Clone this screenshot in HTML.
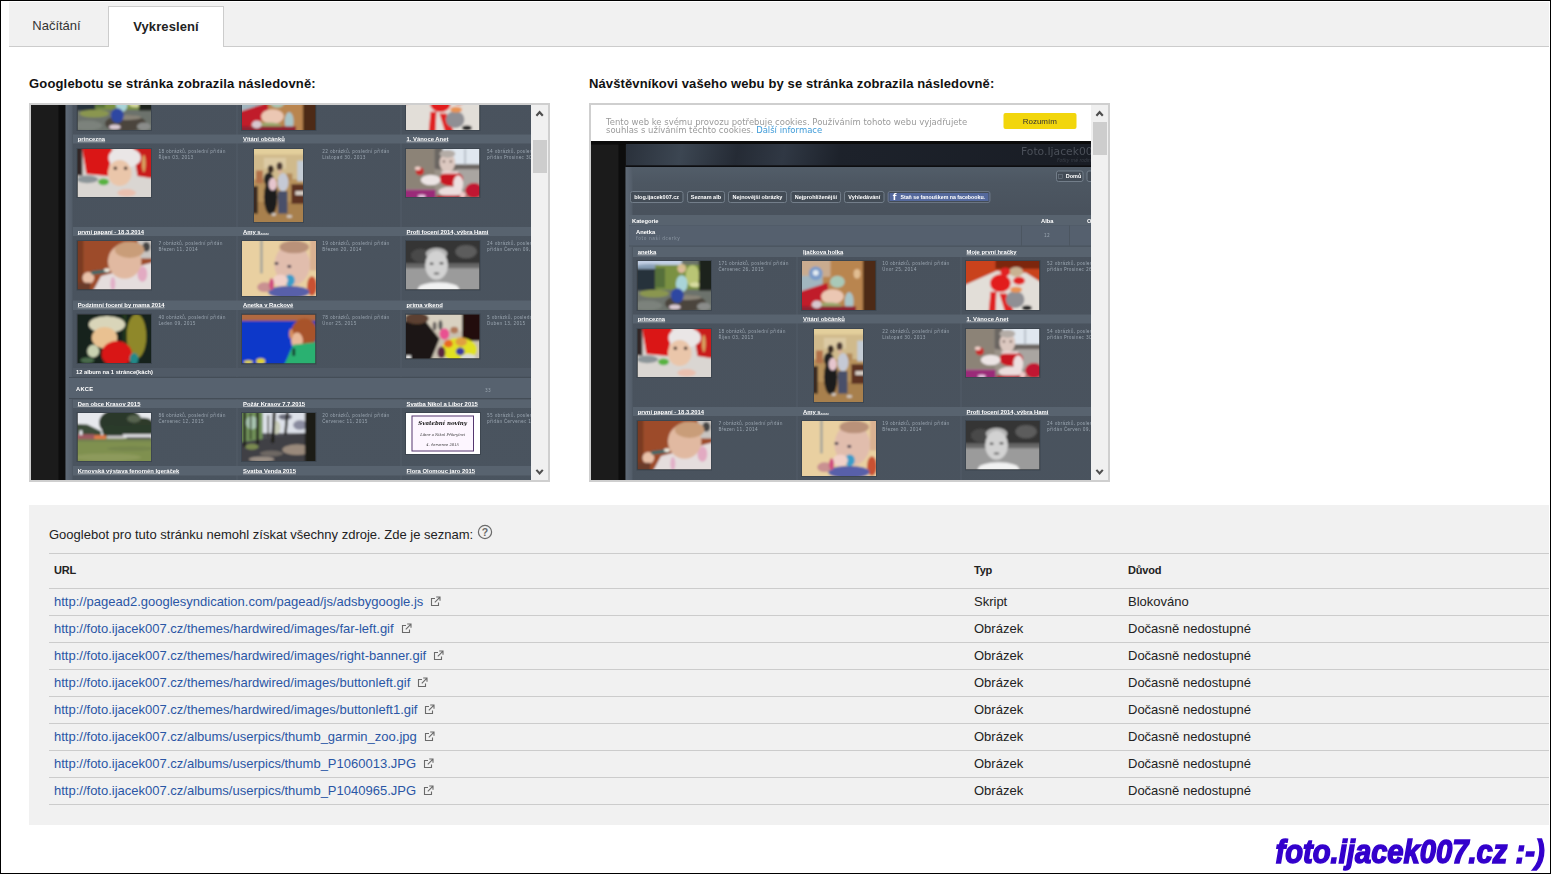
<!DOCTYPE html>
<html lang="cs">
<head>
<meta charset="utf-8">
<title>Vykreslení</title>
<style>
*{box-sizing:border-box;margin:0;padding:0}
html,body{width:1551px;height:874px;overflow:hidden;background:#fff}
body{position:relative;font-family:"Liberation Sans",Arial,sans-serif;color:#222;font-size:13px}
.abs{position:absolute}
#outer{position:absolute;left:0;top:0;width:1551px;height:874px;border:1px solid #000;pointer-events:none;z-index:50}
#tabbar{position:absolute;left:9px;top:2px;width:1540px;height:45px;background:#f1f1f1;border-bottom:1px solid #ccc}
#tab1{position:absolute;left:7px;top:3px;width:99px;height:44px;line-height:46px;text-align:center;font-size:13px;color:#333;padding-left:0}
#tab2{position:absolute;left:108px;top:6px;width:116px;height:41px;background:#fff;border:1px solid #ccc;border-bottom:none;text-align:center;font-weight:bold;font-size:13px;line-height:39px;color:#222;letter-spacing:.1px}
.h{position:absolute;top:76px;font-weight:bold;font-size:13px;line-height:16px;color:#111;white-space:nowrap;letter-spacing:.17px}
.frame{position:absolute;top:103px;width:521px;height:379px;border:2px solid #cfcfcf;background:#4b5560;overflow:hidden}
.view{position:absolute;left:0;top:0;width:500px;height:375px;overflow:hidden;background:#4a535e}
.sb{position:absolute;left:500px;top:0;width:17px;height:375px;background:#f0f0f0}
.sb .thumb{position:absolute;left:2px;width:14px;background:#cdcdcd}
.sb svg{position:absolute;left:0;top:0}
#res{position:absolute;left:29px;top:505px;width:1520px;height:320px;background:#f1f1f1}
#res .intro{position:absolute;left:20px;top:21px;font-size:13px;line-height:16px;color:#222;white-space:nowrap}
.row{position:absolute;left:20px;width:1500px;height:27px;border-top:1px solid #ccc;font-size:13px;line-height:16px;color:#222;white-space:nowrap}
.row span{position:absolute;top:5px}
.row .u{left:5px;color:#2a56a5}
.row .t{left:925px}
.row .d{left:1079px}
.row.hd{height:35px;font-size:11px;font-weight:bold;letter-spacing:-.2px}
.row.hd span{top:8px}
.ext{display:inline-block;width:11px;height:11px;margin-left:7px;vertical-align:-1px}
.hp{display:inline-block;width:16px;height:16px;margin-left:4px;vertical-align:-3px;position:relative;top:-2px}
#wm{position:absolute;right:6px;top:830.5px;font-family:"Liberation Sans",sans-serif;font-weight:bold;font-style:italic;font-size:34px;line-height:40px;color:#3300cc;white-space:nowrap;-webkit-text-stroke:1.6px #3300cc;transform:scaleX(.858);transform-origin:100% 50%}

/* preview gallery, built at 2x then scaled down */
.g{position:absolute;left:0;top:0;width:1000px;height:1160px;transform:scale(.5);transform-origin:0 0;font-family:"Liberation Sans",sans-serif;overflow:hidden}
.g>div{position:absolute}
.g .t{white-space:nowrap;transform:translateY(-50%);line-height:1.15}
.g .band{background:#58636f}
.g .band2{background:#505a66}
.g .ti{font-weight:bold;font-size:11.75px;color:#fff;text-decoration:underline}
.g .ca{font-weight:bold;font-size:11.5px;color:#fff}
.g .in{font-family:"DejaVu Sans",sans-serif;font-size:8.6px;line-height:11.7px !important;color:#9ba6b1;letter-spacing:.55px;transform:none}
.g .ck{font-family:"DejaVu Sans",sans-serif;font-size:16.95px;line-height:16.4px !important;color:#9a9a9a;transform:none}
.g .okb{background:#f2d60c;border-radius:4px;color:#333;font-size:16px;text-align:center;line-height:33px}
.g .logo{font-family:"DejaVu Sans",sans-serif;font-size:21.5px;color:#4b5059}
.g .logo2{font-family:"DejaVu Sans",sans-serif;font-size:9px;color:#3c414a;font-style:italic}
.g .nb{border:2px solid #737e8a;border-radius:5px;background:#434c56;color:#fff;font-weight:bold;font-size:11px;text-align:center;line-height:19px;white-space:nowrap;overflow:hidden}
.g .nb.fb{background:#54689c;border-color:#6a7482;box-shadow:inset 0 0 0 2px #434c56;color:#fff;font-size:10.5px}
.g .nb.fb b{font-size:17px;margin-right:8px;vertical-align:-2px;font-family:"DejaVu Sans",sans-serif}
.g .sq{display:inline-block;width:9px;height:9px;border:1px solid #7a8490;margin-right:6px;vertical-align:-1px}
.g .th{background:#333;box-shadow:0 0 0 2px #3d4650;overflow:hidden}
.g .ph{position:absolute;left:0;top:0;width:100%;height:100%;display:block}
.g .inv{position:absolute;left:0;top:0;width:100%;height:100%;background:#fff;padding:5px 12px 5px 11px}
.g .invb{width:100%;height:100%;border:2px solid #54366f;background:#fdf6ff;text-align:center;font-family:"DejaVu Serif",serif;color:#222}
.g .inv p.a{font-size:11px;font-style:italic;font-weight:bold;margin-top:7px;color:#111}
.g .inv p.b{font-size:7.5px;margin-top:11px;color:#333;font-style:italic}
</style>
</head>
<body>
<svg width="0" height="0" style="position:absolute"><defs><filter id="b2" x="-10%" y="-10%" width="120%" height="120%"><feGaussianBlur stdDeviation="2.6"/></filter></defs></svg>
<div id="tabbar"></div>
<div id="tab1">Načítání</div>
<div id="tab2">Vykreslení</div>

<div class="h" style="left:29px">Googlebotu se stránka zobrazila následovně:</div>
<div class="h" style="left:589px;letter-spacing:.12px">Návštěvníkovi vašeho webu by se stránka zobrazila následovně:</div>

<div class="frame" id="fl" style="left:29px">
  <div class="view" id="vl"><div class="g" style="top:-180px">
<div style="left:0px;top:72px;width:1000px;height:1080px;background:#1b1b1b"></div>
<div style="left:54.6px;top:72px;width:14.4px;height:1080px;background:#0d0d0d"></div>
<div style="left:70px;top:124px;width:930px;height:1040px;background:linear-gradient(#525d69 0,#4d5762 30px,#49525d 90px,#4a545f 100%)"></div>
<div style="left:69px;top:124px;width:14px;height:1040px;background:linear-gradient(90deg,#5f6a77,#525c68)"></div>
<div style="left:0px;top:72px;width:1000px;height:7px;background:#0b0b0b"></div>
<div style="left:70px;top:78px;width:930px;height:46px;background:linear-gradient(100deg,#2a313b 0,#3c4652 12%,#252b35 24%,#303844 34%,#1d222b 46%,#191d25 100%);border-bottom:3px solid #0c0d10"></div>
<div class="t logo" style="left:860px;top:94px;">Foto.Ijacek007.cz</div>
<div class="t logo2" style="left:932px;top:111px;">Fotky mé rodiny</div>
<div style="left:0px;top:0px;width:1000px;height:72px;background:#fff"></div>
<div class="t ck" style="left:30px;top:24.6px">Tento web ke svému provozu potřebuje cookies. Používáním tohoto webu vyjadřujete<br>souhlas s užíváním těchto cookies. <span style="color:#3f9bd8">Další informace</span></div>
<div class="okb" style="left:824.6px;top:16px;width:146px;height:31.6px;">Rozumím</div>
<div class="nb" style="left:930px;top:131.2px;width:54.8px;height:23.2px;"><i class="sq"></i>Domů</div>
<div class="nb" style="left:991.2px;top:131.2px;width:54.8px;height:23.2px;"></div>
<div class="nb" style="left:77.6px;top:172px;width:107.4px;height:24px;">blog.ijacek007.cz</div>
<div class="nb" style="left:192px;top:172px;width:75.6px;height:24px;">Seznam alb</div>
<div class="nb" style="left:274px;top:172px;width:118px;height:24px;">Nejnovější obrázky</div>
<div class="nb" style="left:399.2px;top:172px;width:101.2px;height:24px;">Nejprohlíženější</div>
<div class="nb" style="left:506.4px;top:172px;width:80.2px;height:24px;">Vyhledávání</div>
<div class="nb fb" style="left:593px;top:172px;width:205.6px;height:24px;"><b>f</b>Staň se fanouškem na facebooku.</div>
<div class="band" style="left:76px;top:220px;width:924px;height:20px;"></div>
<div class="t ca" style="left:82px;top:232px;">Kategorie</div>
<div class="t ca" style="left:900px;top:232px;">Alba</div>
<div class="t ca" style="left:992px;top:232px;">Obrázky</div>
<div style="left:76px;top:240px;width:924px;height:43px;background:#55606e;border-top:1px solid #4f5965;border-bottom:2px solid #4a545f"></div>
<div style="left:860px;top:241px;width:2px;height:41px;background:#4c5661"></div>
<div style="left:956px;top:241px;width:2px;height:41px;background:#4c5661"></div>
<div class="t ca" style="left:90px;top:254px;">Anetka</div>
<div class="t in" style="left:90px;top:262px;letter-spacing:1.25px;color:#8d98a4">foto naší dcerky</div>
<div class="t in" style="left:906px;top:255.2px;">12</div>
<div style="left:411px;top:284px;width:2px;height:640px;background:#535d69"></div>
<div style="left:411px;top:948px;width:2px;height:180px;background:#535d69"></div>
<div style="left:739px;top:284px;width:2px;height:640px;background:#535d69"></div>
<div style="left:739px;top:948px;width:2px;height:180px;background:#535d69"></div>
<div class="band" style="left:84px;top:284px;width:916px;height:20px;"></div>
<div class="t ti" style="left:93.4px;top:294px;">anetka</div>
<div class="t ti" style="left:424px;top:294px;">Ijačkova holka</div>
<div class="t ti" style="left:751px;top:294px;">Moje první hračky</div>
<div class="th" style="left:93px;top:311.6px;width:147.4px;height:98.8px;"><svg class="ph" viewBox="0 0 150 100" preserveAspectRatio="none"><g filter="url(#b2)"><rect x="-10" y="-10" width="170" height="120" fill="#6b7268" /><rect x="-10" y="-10" width="100" height="22" fill="#c3d0e4" /><ellipse cx="25" cy="12" rx="30" ry="6" fill="#8aa0b8" /><rect x="-10" y="16" width="52" height="46" fill="#27333a" /><rect x="36" y="8" width="92" height="50" fill="#7a9143" /><rect x="36" y="14" width="20" height="40" fill="#56703a" /><ellipse cx="112" cy="30" rx="14" ry="22" fill="#b9c574" /><ellipse cx="118" cy="48" rx="12" ry="5" fill="#d8dca0" /><rect x="125" y="-10" width="30" height="72" fill="#1f231b" /><rect x="-10" y="60" width="170" height="50" fill="#6c726c" /><ellipse cx="34" cy="66" rx="30" ry="8" fill="#8a9650" /><ellipse cx="20" cy="90" rx="30" ry="10" fill="#7c827c" /><ellipse cx="98" cy="86" rx="42" ry="17" fill="#4b453c" /><ellipse cx="100" cy="74" rx="30" ry="5" fill="#8a8478" /><ellipse cx="135" cy="92" rx="14" ry="8" fill="#8a8c8a" /><ellipse cx="90" cy="46" rx="12" ry="17" fill="#a9d4d8" /><ellipse cx="90" cy="15" rx="9" ry="9" fill="#d6bd8c" /><ellipse cx="89" cy="19" rx="5" ry="5" fill="#e0b8a0" /><ellipse cx="81" cy="70" rx="13" ry="15" fill="#2f47a2" /><ellipse cx="76" cy="93" rx="12" ry="5" fill="#dccbd4" /></g></svg></div>
<div class="th" style="left:422px;top:311.6px;width:147.4px;height:98.8px;"><svg class="ph" viewBox="0 0 150 100" preserveAspectRatio="none"><g filter="url(#b2)"><rect x="-10" y="-10" width="170" height="120" fill="#b98550" /><rect x="124" y="-10" width="36" height="120" fill="#4d2b19" /><ellipse cx="112" cy="26" rx="7" ry="10" fill="#e2bd92" /><rect x="-10" y="-10" width="68" height="42" fill="#c9ab8f" /><rect x="-10" y="30" width="52" height="42" fill="#a2b6bf" /><ellipse cx="28" cy="25" rx="14" ry="14" fill="#7b9bc9" /><ellipse cx="28" cy="24" rx="6" ry="6" fill="#e3ebf2" /><polygon points="-5,62 52,44 55,70 -5,105" fill="#c01f2b"/><ellipse cx="72" cy="42" rx="15" ry="12" fill="#a9c9b8" /><ellipse cx="62" cy="72" rx="23" ry="15" fill="#ebc7b3" /><ellipse cx="96" cy="82" rx="9" ry="19" fill="#a9c5c9" /><ellipse cx="55" cy="92" rx="26" ry="8" fill="#9aa86c" /><rect x="-10" y="92" width="120" height="18" fill="#8c2233" /><ellipse cx="30" cy="88" rx="10" ry="8" fill="#d8c8d0" /></g></svg></div>
<div class="th" style="left:749.6px;top:311.6px;width:147.4px;height:98.8px;"><svg class="ph" viewBox="0 0 150 100" preserveAspectRatio="none"><g filter="url(#b2)"><rect x="-10" y="-10" width="170" height="120" fill="#e2ded8" /><polygon points="-10,-10 160,-10 160,48 122,24 62,20 -10,52" fill="#c9421b"/><rect x="60" y="-10" width="100" height="26" fill="#7c2611" /><ellipse cx="102" cy="22" rx="14" ry="10" fill="#c9b292" /><ellipse cx="70" cy="45" rx="21" ry="18" fill="#e21d1d" /><ellipse cx="80" cy="22" rx="10" ry="9" fill="#e22222" /><ellipse cx="108" cy="40" rx="12" ry="8" fill="#e22222" /><polygon points="50,62 62,62 60,105 46,105" fill="#e02020"/><polygon points="68,66 82,66 98,105 80,105" fill="#e02020"/><ellipse cx="100" cy="78" rx="19" ry="17" fill="#8f8f94" /><ellipse cx="102" cy="58" rx="12" ry="6" fill="#ea9352" /><ellipse cx="124" cy="95" rx="10" ry="5" fill="#1e1e1e" /></g></svg></div>
<div class="t in" style="left:254.8px;top:311.4px;">171 obrázků, poslední přidán<br>Červenec 26, 2015</div>
<div class="t in" style="left:582.6px;top:311.4px;">10 obrázků, poslední přidán<br>Únor 25, 2014</div>
<div class="t in" style="left:912px;top:311.4px;">52 obrázků, poslední<br>přidán Prosinec 26, 2013</div>
<div class="band" style="left:84px;top:418.8px;width:916px;height:18.4px;"></div>
<div class="t ti" style="left:93.4px;top:428px;">princezna</div>
<div class="t ti" style="left:424px;top:428px;">Vítání občánků</div>
<div class="t ti" style="left:751px;top:428px;">1. Vánoce Anet</div>
<div class="th" style="left:93px;top:447.6px;width:147.4px;height:96.4px;"><svg class="ph" viewBox="0 0 150 100" preserveAspectRatio="none"><g filter="url(#b2)"><rect x="-10" y="-10" width="170" height="120" fill="#dad6d2" /><polygon points="8,-10 72,-10 62,56 18,52" fill="#da1919"/><rect x="-10" y="-10" width="20" height="65" fill="#302828" /><polygon points="112,-10 160,-10 160,62 122,56" fill="#c91c1c"/><ellipse cx="96" cy="18" rx="33" ry="21" fill="#eae6e6" /><ellipse cx="86" cy="50" rx="24" ry="27" fill="#eac6aa" /><ellipse cx="53" cy="68" rx="11" ry="7" fill="#58b241" /><ellipse cx="20" cy="63" rx="22" ry="8" fill="#8b9498" /><ellipse cx="100" cy="91" rx="19" ry="8" fill="#eac0af" /><ellipse cx="77" cy="40" rx="3.5" ry="3.5" fill="#3e261e" /><ellipse cx="98" cy="40" rx="3.5" ry="3.5" fill="#3e261e" /><ellipse cx="135" cy="30" rx="4" ry="18" fill="#d8a060" /></g></svg></div>
<div class="th" style="left:446px;top:447.6px;width:98.4px;height:146.8px;"><svg class="ph" viewBox="0 0 100 150" preserveAspectRatio="none"><g filter="url(#b2)"><rect x="-10" y="-10" width="120" height="170" fill="#b8925c" /><rect x="-10" y="-10" width="120" height="22" fill="#e3cf9c" /><rect x="-10" y="12" width="120" height="50" fill="#d0ba8c" /><rect x="20" y="18" width="45" height="22" fill="#dccaa4" /><rect x="-10" y="108" width="120" height="50" fill="#a8804e" /><rect x="88" y="24" width="16" height="42" fill="#c5cdd5" /><rect x="66" y="50" width="12" height="14" fill="#b08858" /><rect x="76" y="72" width="28" height="40" fill="#5b3121" /><rect x="84" y="86" width="18" height="8" fill="#d8d0c8" /><rect x="-10" y="76" width="18" height="56" fill="#3b2b21" /><rect x="4" y="44" width="14" height="26" fill="#b07048" /><ellipse cx="34" cy="98" rx="14" ry="36" fill="#1c1a1e" /><ellipse cx="34" cy="41" rx="6" ry="8" fill="#392923" /><ellipse cx="30" cy="62" rx="10" ry="14" fill="#242024" /><ellipse cx="59" cy="68" rx="11" ry="19" fill="#c5c9d5" /><ellipse cx="52" cy="35" rx="6" ry="8" fill="#493831" /><ellipse cx="53" cy="46" rx="4" ry="4" fill="#d8b098" /><rect x="49" y="86" width="19" height="46" fill="#485069" /><ellipse cx="38" cy="72" rx="8" ry="13" fill="#e6c6ce" /><ellipse cx="40" cy="134" rx="5" ry="3" fill="#d0c8c0" /><ellipse cx="72" cy="138" rx="6" ry="3" fill="#d0c8c0" /></g></svg></div>
<div class="th" style="left:749.6px;top:447.6px;width:147.8px;height:96.8px;"><svg class="ph" viewBox="0 0 150 100" preserveAspectRatio="none"><g filter="url(#b2)"><rect x="-10" y="-10" width="170" height="120" fill="#9b9389" /><rect x="-10" y="-10" width="68" height="92" fill="#8c8377" /><rect x="74" y="-10" width="90" height="42" fill="#e0e7ef" /><rect x="58" y="-10" width="16" height="50" fill="#6a6662" /><rect x="60" y="32" width="100" height="10" fill="#6b6561" /><rect x="118" y="0" width="4" height="32" fill="#b8c0c8" /><rect x="104" y="42" width="60" height="42" fill="#a9a5a1" /><ellipse cx="84" cy="28" rx="16" ry="20" fill="#dcc8c0" /><ellipse cx="84" cy="10" rx="16" ry="8" fill="#b4aca6" /><ellipse cx="77" cy="26" rx="2.5" ry="2" fill="#5a4640" /><ellipse cx="91" cy="26" rx="2.5" ry="2" fill="#5a4640" /><ellipse cx="92" cy="62" rx="24" ry="15" fill="#c91921" /><rect x="72" y="46" width="34" height="5" fill="#ecd8d8" /><ellipse cx="50" cy="64" rx="20" ry="11" fill="#ece4e4" /><ellipse cx="106" cy="72" rx="10" ry="18" fill="#ece0e0" /><ellipse cx="28" cy="46" rx="8" ry="8" fill="#c92929" /><ellipse cx="24" cy="40" rx="6" ry="4" fill="#f0d0c8" /><ellipse cx="90" cy="88" rx="24" ry="10" fill="#ecdede" /><rect x="-10" y="84" width="70" height="26" fill="#9b2979" /><ellipse cx="32" cy="98" rx="8" ry="4" fill="#e8c0e0" /><ellipse cx="138" cy="86" rx="18" ry="16" fill="#c11931" /><rect x="62" y="96" width="60" height="10" fill="#b11929" /><ellipse cx="115" cy="95" rx="6" ry="6" fill="#f0c8c8" /></g></svg></div>
<div class="t in" style="left:254.8px;top:447.4px;">18 obrázků, poslední přidán<br>Říjen 03, 2013</div>
<div class="t in" style="left:582.6px;top:447.4px;">22 obrázků, poslední přidán<br>Listopad 30, 2013</div>
<div class="t in" style="left:912px;top:447.4px;">54 obrázků, poslední<br>přidán Prosinec 30, 2013</div>
<div class="band" style="left:84px;top:604px;width:916px;height:18px;"></div>
<div class="t ti" style="left:93.4px;top:613px;">první papaní - 18.3.2014</div>
<div class="t ti" style="left:424px;top:613px;">Amy s.....</div>
<div class="t ti" style="left:751px;top:613px;">Profi focení 2014, výbra Hami</div>
<div class="th" style="left:93px;top:632px;width:147.4px;height:97px;"><svg class="ph" viewBox="0 0 150 100" preserveAspectRatio="none"><g filter="url(#b2)"><rect x="-10" y="-10" width="170" height="120" fill="#9d4b29" /><rect x="-10" y="-10" width="22" height="120" fill="#7a3a24" /><rect x="122" y="-10" width="40" height="46" fill="#c9c5c1" /><ellipse cx="140" cy="12" rx="8" ry="10" fill="#454545" /><polygon points="48,72 160,42 160,110 28,110" fill="#e5dddd"/><ellipse cx="132" cy="68" rx="10" ry="16" fill="#e2aac2" /><ellipse cx="72" cy="88" rx="5" ry="14" fill="#e2b0c8" /><ellipse cx="96" cy="42" rx="34" ry="36" fill="#e1b9a1" /><ellipse cx="106" cy="18" rx="30" ry="17" fill="#c99d79" /><ellipse cx="22" cy="76" rx="12" ry="12" fill="#e9c1a9" /><rect x="28" y="60" width="36" height="7" fill="#3f6969" transform="rotate(-8 46 63)"/><ellipse cx="60" cy="60" rx="6" ry="4" fill="#f0ece0" /><rect x="-10" y="86" width="36" height="24" fill="#6b3b29" /></g></svg></div>
<div class="th" style="left:422px;top:632px;width:147.8px;height:110px;"><svg class="ph" viewBox="0 0 150 112" preserveAspectRatio="none"><g filter="url(#b2)"><rect x="-10" y="-10" width="170" height="132" fill="#e9d0a1" /><rect x="37" y="-10" width="5" height="76" fill="#a4a49c" /><ellipse cx="102" cy="48" rx="36" ry="42" fill="#e1bdad" /><ellipse cx="106" cy="12" rx="30" ry="13" fill="#b99179" /><rect x="138" y="-10" width="22" height="70" fill="#d9b191" /><ellipse cx="142" cy="92" rx="10" ry="20" fill="#c95131" /><ellipse cx="95" cy="104" rx="42" ry="13" fill="#5961a9" /><ellipse cx="97" cy="80" rx="10" ry="12" fill="#3b9dc9" /><ellipse cx="78" cy="80" rx="15" ry="12" fill="#f1d1c9" /><ellipse cx="46" cy="94" rx="15" ry="10" fill="#c99191" /><ellipse cx="60" cy="88" rx="5" ry="12" fill="#d05080" /><ellipse cx="70" cy="46" rx="4" ry="3" fill="#40384a" /><ellipse cx="96" cy="52" rx="4" ry="3" fill="#40384a" /></g></svg></div>
<div class="th" style="left:749.6px;top:632px;width:147.8px;height:97px;"><svg class="ph" viewBox="0 0 150 100" preserveAspectRatio="none"><g filter="url(#b2)"><rect x="-10" y="-10" width="170" height="120" fill="#353535" /><ellipse cx="122" cy="22" rx="22" ry="14" fill="#5c5c5c" /><ellipse cx="30" cy="30" rx="20" ry="14" fill="#4a4a4a" /><rect x="-10" y="52" width="170" height="60" fill="#9b9b9b" /><rect x="-10" y="46" width="170" height="10" fill="#686868" /><ellipse cx="62" cy="26" rx="22" ry="12" fill="#b4b4b4" /><ellipse cx="62" cy="50" rx="23" ry="30" fill="#d2d2d2" /><ellipse cx="66" cy="100" rx="42" ry="15" fill="#f2f2f2" /><ellipse cx="52" cy="47" rx="4" ry="2.5" fill="#555" /><ellipse cx="72" cy="46" rx="4" ry="2.5" fill="#555" /><ellipse cx="62" cy="67" rx="6" ry="2.5" fill="#777" /></g></svg></div>
<div class="t in" style="left:254.8px;top:631.8px;">7 obrázků, poslední přidán<br>Březen 11, 2014</div>
<div class="t in" style="left:582.6px;top:631.8px;">19 obrázků, poslední přidán<br>Březen 20, 2014</div>
<div class="t in" style="left:912px;top:631.8px;">24 obrázků, poslední<br>přidán Červen 09, 2014</div>
<div class="band" style="left:84px;top:750.8px;width:916px;height:19.2px;"></div>
<div class="t ti" style="left:93.4px;top:760.4px;">Podzimní focení by mama 2014</div>
<div class="t ti" style="left:424px;top:760.4px;">Anetka v Rackové</div>
<div class="t ti" style="left:751px;top:760.4px;">prima víkend</div>
<div class="th" style="left:93px;top:779.4px;width:147.4px;height:96.4px;"><svg class="ph" viewBox="0 0 150 100" preserveAspectRatio="none"><g filter="url(#b2)"><rect x="-10" y="-10" width="170" height="120" fill="#15241a" /><ellipse cx="120" cy="45" rx="20" ry="46" fill="#8f8829" /><rect x="92" y="-10" width="8" height="120" fill="#23351f" /><ellipse cx="60" cy="21" rx="37" ry="18" fill="#d9d5b9" /><ellipse cx="55" cy="48" rx="26" ry="22" fill="#e9c191" /><ellipse cx="80" cy="82" rx="31" ry="27" fill="#d91515" /><ellipse cx="32" cy="76" rx="12" ry="13" fill="#c9d1b1" /><ellipse cx="115" cy="92" rx="9" ry="12" fill="#218989" /><ellipse cx="20" cy="95" rx="14" ry="6" fill="#4a6a4c" /></g></svg></div>
<div class="th" style="left:422px;top:779.4px;width:147.4px;height:97.2px;"><svg class="ph" viewBox="0 0 150 100" preserveAspectRatio="none"><g filter="url(#b2)"><rect x="-10" y="-10" width="170" height="120" fill="#0839c9" /><rect x="-10" y="-10" width="170" height="23" fill="#b16941" /><ellipse cx="127" cy="38" rx="27" ry="30" fill="#a8522a" /><ellipse cx="112" cy="54" rx="12" ry="17" fill="#e9b999" /><polygon points="84,108 104,62 160,56 160,108" fill="#29b171"/><ellipse cx="13" cy="98" rx="9" ry="4" fill="#e9d941" /><ellipse cx="38" cy="96" rx="9" ry="6" fill="#e1d131" /><rect x="103" y="70" width="5" height="15" fill="#181828" /><ellipse cx="100" cy="40" rx="4" ry="10" fill="#d89060" /></g></svg></div>
<div class="th" style="left:749.6px;top:779.4px;width:147.8px;height:87.6px;"><svg class="ph" viewBox="0 0 150 90" preserveAspectRatio="none"><g filter="url(#b2)"><rect x="-10" y="-10" width="170" height="110" fill="#c9c1b1" /><rect x="38" y="-10" width="80" height="44" fill="#d9d1c1" /><ellipse cx="70" cy="22" rx="4" ry="10" fill="#5a5a5a" /><ellipse cx="58" cy="24" rx="4" ry="9" fill="#6a6460" /><polygon points="-10,14 40,14 68,50 48,100 -10,100" fill="#1b1715"/><ellipse cx="22" cy="8" rx="24" ry="12" fill="#5b4131" /><rect x="114" y="-10" width="46" height="64" fill="#21110d" /><ellipse cx="108" cy="72" rx="36" ry="24" fill="#e1e121" /><ellipse cx="78" cy="40" rx="10" ry="12" fill="#e95191" /><ellipse cx="86" cy="60" rx="9" ry="8" fill="#e96921" /><ellipse cx="112" cy="56" rx="12" ry="9" fill="#e0a040" /><ellipse cx="98" cy="32" rx="8" ry="7" fill="#b07858" /><ellipse cx="110" cy="76" rx="9" ry="8" fill="#3939a1" /><ellipse cx="126" cy="88" rx="15" ry="7" fill="#d9d9d9" /><rect x="0" y="84" width="10" height="16" fill="#e8e8e8" /><ellipse cx="72" cy="78" rx="8" ry="12" fill="#5a2840" /></g></svg></div>
<div class="t in" style="left:254.8px;top:779.2px;">40 obrázků, poslední přidán<br>Leden 09, 2015</div>
<div class="t in" style="left:582.6px;top:779.2px;">78 obrázků, poslední přidán<br>Únor 25, 2015</div>
<div class="t in" style="left:912px;top:779.2px;">5 obrázků, poslední přidán<br>Duben 13, 2015</div>
<div class="band2" style="left:84px;top:885.6px;width:916px;height:17.4px;"></div>
<div class="t ca" style="left:90px;top:894.4px;">12 album na 1 stránce(kách)</div>
<div style="left:76px;top:904px;width:924px;height:44px;background:#57626f;border-top:2px solid #444d57;border-bottom:2px solid #444d57"></div>
<div class="t ca" style="left:90px;top:927.6px;letter-spacing:.5px">AKCE</div>
<div class="t in" style="left:908px;top:924.6px;">33</div>
<div class="band" style="left:84px;top:948.8px;width:916px;height:17.2px;"></div>
<div class="t ti" style="left:93.4px;top:957.4px;">Den obce Krasov 2015</div>
<div class="t ti" style="left:424px;top:957.4px;">Požár Krasov 7.7.2015</div>
<div class="t ti" style="left:751px;top:957.4px;">Svatba Nikol a Libor 2015</div>
<div class="th" style="left:93px;top:976px;width:147.4px;height:96.4px;"><svg class="ph" viewBox="0 0 150 100" preserveAspectRatio="none"><g filter="url(#b2)"><rect x="-10" y="-10" width="170" height="120" fill="#7f8f4f" /><rect x="-10" y="-10" width="170" height="56" fill="#e7e9ed" /><ellipse cx="88" cy="20" rx="44" ry="30" fill="#2b3929" /><ellipse cx="70" cy="38" rx="20" ry="12" fill="#34442f" /><ellipse cx="134" cy="32" rx="26" ry="22" fill="#2d3b2b" /><rect x="52" y="26" width="108" height="22" fill="#2c3a2a" /><ellipse cx="115" cy="12" rx="14" ry="8" fill="#56644f" /><polygon points="-10,22 20,24 48,38 48,50 -10,50" fill="#3b4b39"/><rect x="92" y="44" width="62" height="8" fill="#e1e1e5" /><rect x="100" y="50" width="50" height="4" fill="#5a5a58" /><rect x="33" y="46" width="25" height="8" fill="#e17949" /><rect x="-10" y="44" width="44" height="11" fill="#9c5860" /><rect x="4" y="36" width="6" height="10" fill="#e8e8f0" /><rect x="60" y="47" width="34" height="6" fill="#c8c4c8" /><rect x="-10" y="56" width="170" height="50" fill="#7f9050" /><rect x="-10" y="55" width="170" height="4" fill="#6f7f50" /><ellipse cx="60" cy="92" rx="70" ry="8" fill="#8d9a5c" /><ellipse cx="110" cy="74" rx="50" ry="5" fill="#76864e" /></g></svg></div>
<div class="th" style="left:422px;top:976px;width:147.4px;height:96.4px;"><svg class="ph" viewBox="0 0 150 100" preserveAspectRatio="none"><g filter="url(#b2)"><rect x="-10" y="-10" width="170" height="120" fill="#4c4c52" /><rect x="-10" y="-10" width="150" height="52" fill="#dde1e9" /><rect x="-10" y="-10" width="52" height="72" fill="#6f9058" /><ellipse cx="20" cy="20" rx="12" ry="14" fill="#a8c4b0" /><ellipse cx="118" cy="25" rx="14" ry="10" fill="#8a8ca0" /><ellipse cx="88" cy="8" rx="14" ry="6" fill="#6a6c7a" /><ellipse cx="70" cy="30" rx="8" ry="14" fill="#c8ccb8" /><polygon points="-10,62 138,40 160,110 -10,110" fill="#3f3f45"/><ellipse cx="112" cy="76" rx="30" ry="11" fill="#9a8a7c" /><ellipse cx="60" cy="84" rx="24" ry="6" fill="#6e6864" /><ellipse cx="40" cy="96" rx="26" ry="6" fill="#9a8e84" /><ellipse cx="20" cy="70" rx="14" ry="6" fill="#7a8a50" /><rect x="3" y="-10" width="5" height="80" fill="#1c1c18" /><rect x="29" y="-10" width="5" height="75" fill="#1c1c18" /><rect x="61" y="-10" width="6" height="72" fill="#1c1c18" transform="rotate(3 64 30)"/><rect x="88" y="-10" width="5" height="56" fill="#1c1c18" transform="rotate(5 90 20)"/><rect x="128" y="-10" width="24" height="120" fill="#1c1c18" /><rect x="52" y="5" width="3" height="45" fill="#3c3c30" /><rect x="16" y="0" width="3" height="55" fill="#2c3424" /></g></svg></div>
<div class="th" style="left:749.6px;top:976px;width:148.4px;height:82.4px;"><div class="inv"><div class="invb"><p class="a">Svatební noviny</p><p class="b">Libor a Nikol Přikrylovi</p><p class="b">4. července 2015</p></div></div></div>
<div class="t in" style="left:254.8px;top:975.8px;">86 obrázků, poslední přidán<br>Červenec 12, 2015</div>
<div class="t in" style="left:582.6px;top:975.8px;">20 obrázků, poslední přidán<br>Červenec 11, 2015</div>
<div class="t in" style="left:912px;top:975.8px;">55 obrázků, poslední<br>přidán Červenec 19, 2015</div>
<div class="band" style="left:84px;top:1082px;width:916px;height:18.8px;"></div>
<div class="t ti" style="left:93.4px;top:1091.6px;">Krnovská výstava fenomén Igeráček</div>
<div class="t ti" style="left:424px;top:1091.6px;">Svatba Venda 2015</div>
<div class="t ti" style="left:751px;top:1091.6px;">Flora Olomouc jaro 2015</div>
</div></div>
  <div class="sb"><div class="thumb" style="top:35px;height:33px"></div><svg class="ar" viewBox="0 0 17 375" width="17" height="375"><path d="M5.4 10.8 L8.6 7.2 L11.8 10.8 M5.4 364.9 L8.6 368.5 L11.8 364.9" fill="none" stroke="#4f4f4f" stroke-width="2.1"/></svg></div>
</div>
<div class="frame" id="fr" style="left:589px">
  <div class="view" id="vr"><div class="g">
<div style="left:0px;top:72px;width:1000px;height:1080px;background:#1b1b1b"></div>
<div style="left:54.6px;top:72px;width:14.4px;height:1080px;background:#0d0d0d"></div>
<div style="left:70px;top:124px;width:930px;height:1040px;background:linear-gradient(#525d69 0,#4d5762 30px,#49525d 90px,#4a545f 100%)"></div>
<div style="left:69px;top:124px;width:14px;height:1040px;background:linear-gradient(90deg,#5f6a77,#525c68)"></div>
<div style="left:0px;top:72px;width:1000px;height:7px;background:#0b0b0b"></div>
<div style="left:70px;top:78px;width:930px;height:46px;background:linear-gradient(100deg,#2a313b 0,#3c4652 12%,#252b35 24%,#303844 34%,#1d222b 46%,#191d25 100%);border-bottom:3px solid #0c0d10"></div>
<div class="t logo" style="left:860px;top:94px;">Foto.Ijacek007.cz</div>
<div class="t logo2" style="left:932px;top:111px;">Fotky mé rodiny</div>
<div style="left:0px;top:0px;width:1000px;height:72px;background:#fff"></div>
<div class="t ck" style="left:30px;top:24.6px">Tento web ke svému provozu potřebuje cookies. Používáním tohoto webu vyjadřujete<br>souhlas s užíváním těchto cookies. <span style="color:#3f9bd8">Další informace</span></div>
<div class="okb" style="left:824.6px;top:16px;width:146px;height:31.6px;">Rozumím</div>
<div class="nb" style="left:930px;top:131.2px;width:54.8px;height:23.2px;"><i class="sq"></i>Domů</div>
<div class="nb" style="left:991.2px;top:131.2px;width:54.8px;height:23.2px;"></div>
<div class="nb" style="left:77.6px;top:172px;width:107.4px;height:24px;">blog.ijacek007.cz</div>
<div class="nb" style="left:192px;top:172px;width:75.6px;height:24px;">Seznam alb</div>
<div class="nb" style="left:274px;top:172px;width:118px;height:24px;">Nejnovější obrázky</div>
<div class="nb" style="left:399.2px;top:172px;width:101.2px;height:24px;">Nejprohlíženější</div>
<div class="nb" style="left:506.4px;top:172px;width:80.2px;height:24px;">Vyhledávání</div>
<div class="nb fb" style="left:593px;top:172px;width:205.6px;height:24px;"><b>f</b>Staň se fanouškem na facebooku.</div>
<div class="band" style="left:76px;top:220px;width:924px;height:20px;"></div>
<div class="t ca" style="left:82px;top:232px;">Kategorie</div>
<div class="t ca" style="left:900px;top:232px;">Alba</div>
<div class="t ca" style="left:992px;top:232px;">Obrázky</div>
<div style="left:76px;top:240px;width:924px;height:43px;background:#55606e;border-top:1px solid #4f5965;border-bottom:2px solid #4a545f"></div>
<div style="left:860px;top:241px;width:2px;height:41px;background:#4c5661"></div>
<div style="left:956px;top:241px;width:2px;height:41px;background:#4c5661"></div>
<div class="t ca" style="left:90px;top:254px;">Anetka</div>
<div class="t in" style="left:90px;top:262px;letter-spacing:1.25px;color:#8d98a4">foto naší dcerky</div>
<div class="t in" style="left:906px;top:255.2px;">12</div>
<div style="left:411px;top:284px;width:2px;height:640px;background:#535d69"></div>
<div style="left:411px;top:948px;width:2px;height:180px;background:#535d69"></div>
<div style="left:739px;top:284px;width:2px;height:640px;background:#535d69"></div>
<div style="left:739px;top:948px;width:2px;height:180px;background:#535d69"></div>
<div class="band" style="left:84px;top:284px;width:916px;height:20px;"></div>
<div class="t ti" style="left:93.4px;top:294px;">anetka</div>
<div class="t ti" style="left:424px;top:294px;">Ijačkova holka</div>
<div class="t ti" style="left:751px;top:294px;">Moje první hračky</div>
<div class="th" style="left:93px;top:311.6px;width:147.4px;height:98.8px;"><svg class="ph" viewBox="0 0 150 100" preserveAspectRatio="none"><g filter="url(#b2)"><rect x="-10" y="-10" width="170" height="120" fill="#6b7268" /><rect x="-10" y="-10" width="100" height="22" fill="#c3d0e4" /><ellipse cx="25" cy="12" rx="30" ry="6" fill="#8aa0b8" /><rect x="-10" y="16" width="52" height="46" fill="#27333a" /><rect x="36" y="8" width="92" height="50" fill="#7a9143" /><rect x="36" y="14" width="20" height="40" fill="#56703a" /><ellipse cx="112" cy="30" rx="14" ry="22" fill="#b9c574" /><ellipse cx="118" cy="48" rx="12" ry="5" fill="#d8dca0" /><rect x="125" y="-10" width="30" height="72" fill="#1f231b" /><rect x="-10" y="60" width="170" height="50" fill="#6c726c" /><ellipse cx="34" cy="66" rx="30" ry="8" fill="#8a9650" /><ellipse cx="20" cy="90" rx="30" ry="10" fill="#7c827c" /><ellipse cx="98" cy="86" rx="42" ry="17" fill="#4b453c" /><ellipse cx="100" cy="74" rx="30" ry="5" fill="#8a8478" /><ellipse cx="135" cy="92" rx="14" ry="8" fill="#8a8c8a" /><ellipse cx="90" cy="46" rx="12" ry="17" fill="#a9d4d8" /><ellipse cx="90" cy="15" rx="9" ry="9" fill="#d6bd8c" /><ellipse cx="89" cy="19" rx="5" ry="5" fill="#e0b8a0" /><ellipse cx="81" cy="70" rx="13" ry="15" fill="#2f47a2" /><ellipse cx="76" cy="93" rx="12" ry="5" fill="#dccbd4" /></g></svg></div>
<div class="th" style="left:422px;top:311.6px;width:147.4px;height:98.8px;"><svg class="ph" viewBox="0 0 150 100" preserveAspectRatio="none"><g filter="url(#b2)"><rect x="-10" y="-10" width="170" height="120" fill="#b98550" /><rect x="124" y="-10" width="36" height="120" fill="#4d2b19" /><ellipse cx="112" cy="26" rx="7" ry="10" fill="#e2bd92" /><rect x="-10" y="-10" width="68" height="42" fill="#c9ab8f" /><rect x="-10" y="30" width="52" height="42" fill="#a2b6bf" /><ellipse cx="28" cy="25" rx="14" ry="14" fill="#7b9bc9" /><ellipse cx="28" cy="24" rx="6" ry="6" fill="#e3ebf2" /><polygon points="-5,62 52,44 55,70 -5,105" fill="#c01f2b"/><ellipse cx="72" cy="42" rx="15" ry="12" fill="#a9c9b8" /><ellipse cx="62" cy="72" rx="23" ry="15" fill="#ebc7b3" /><ellipse cx="96" cy="82" rx="9" ry="19" fill="#a9c5c9" /><ellipse cx="55" cy="92" rx="26" ry="8" fill="#9aa86c" /><rect x="-10" y="92" width="120" height="18" fill="#8c2233" /><ellipse cx="30" cy="88" rx="10" ry="8" fill="#d8c8d0" /></g></svg></div>
<div class="th" style="left:749.6px;top:311.6px;width:147.4px;height:98.8px;"><svg class="ph" viewBox="0 0 150 100" preserveAspectRatio="none"><g filter="url(#b2)"><rect x="-10" y="-10" width="170" height="120" fill="#e2ded8" /><polygon points="-10,-10 160,-10 160,48 122,24 62,20 -10,52" fill="#c9421b"/><rect x="60" y="-10" width="100" height="26" fill="#7c2611" /><ellipse cx="102" cy="22" rx="14" ry="10" fill="#c9b292" /><ellipse cx="70" cy="45" rx="21" ry="18" fill="#e21d1d" /><ellipse cx="80" cy="22" rx="10" ry="9" fill="#e22222" /><ellipse cx="108" cy="40" rx="12" ry="8" fill="#e22222" /><polygon points="50,62 62,62 60,105 46,105" fill="#e02020"/><polygon points="68,66 82,66 98,105 80,105" fill="#e02020"/><ellipse cx="100" cy="78" rx="19" ry="17" fill="#8f8f94" /><ellipse cx="102" cy="58" rx="12" ry="6" fill="#ea9352" /><ellipse cx="124" cy="95" rx="10" ry="5" fill="#1e1e1e" /></g></svg></div>
<div class="t in" style="left:254.8px;top:311.4px;">171 obrázků, poslední přidán<br>Červenec 26, 2015</div>
<div class="t in" style="left:582.6px;top:311.4px;">10 obrázků, poslední přidán<br>Únor 25, 2014</div>
<div class="t in" style="left:912px;top:311.4px;">52 obrázků, poslední<br>přidán Prosinec 26, 2013</div>
<div class="band" style="left:84px;top:418.8px;width:916px;height:18.4px;"></div>
<div class="t ti" style="left:93.4px;top:428px;">princezna</div>
<div class="t ti" style="left:424px;top:428px;">Vítání občánků</div>
<div class="t ti" style="left:751px;top:428px;">1. Vánoce Anet</div>
<div class="th" style="left:93px;top:447.6px;width:147.4px;height:96.4px;"><svg class="ph" viewBox="0 0 150 100" preserveAspectRatio="none"><g filter="url(#b2)"><rect x="-10" y="-10" width="170" height="120" fill="#dad6d2" /><polygon points="8,-10 72,-10 62,56 18,52" fill="#da1919"/><rect x="-10" y="-10" width="20" height="65" fill="#302828" /><polygon points="112,-10 160,-10 160,62 122,56" fill="#c91c1c"/><ellipse cx="96" cy="18" rx="33" ry="21" fill="#eae6e6" /><ellipse cx="86" cy="50" rx="24" ry="27" fill="#eac6aa" /><ellipse cx="53" cy="68" rx="11" ry="7" fill="#58b241" /><ellipse cx="20" cy="63" rx="22" ry="8" fill="#8b9498" /><ellipse cx="100" cy="91" rx="19" ry="8" fill="#eac0af" /><ellipse cx="77" cy="40" rx="3.5" ry="3.5" fill="#3e261e" /><ellipse cx="98" cy="40" rx="3.5" ry="3.5" fill="#3e261e" /><ellipse cx="135" cy="30" rx="4" ry="18" fill="#d8a060" /></g></svg></div>
<div class="th" style="left:446px;top:447.6px;width:98.4px;height:146.8px;"><svg class="ph" viewBox="0 0 100 150" preserveAspectRatio="none"><g filter="url(#b2)"><rect x="-10" y="-10" width="120" height="170" fill="#b8925c" /><rect x="-10" y="-10" width="120" height="22" fill="#e3cf9c" /><rect x="-10" y="12" width="120" height="50" fill="#d0ba8c" /><rect x="20" y="18" width="45" height="22" fill="#dccaa4" /><rect x="-10" y="108" width="120" height="50" fill="#a8804e" /><rect x="88" y="24" width="16" height="42" fill="#c5cdd5" /><rect x="66" y="50" width="12" height="14" fill="#b08858" /><rect x="76" y="72" width="28" height="40" fill="#5b3121" /><rect x="84" y="86" width="18" height="8" fill="#d8d0c8" /><rect x="-10" y="76" width="18" height="56" fill="#3b2b21" /><rect x="4" y="44" width="14" height="26" fill="#b07048" /><ellipse cx="34" cy="98" rx="14" ry="36" fill="#1c1a1e" /><ellipse cx="34" cy="41" rx="6" ry="8" fill="#392923" /><ellipse cx="30" cy="62" rx="10" ry="14" fill="#242024" /><ellipse cx="59" cy="68" rx="11" ry="19" fill="#c5c9d5" /><ellipse cx="52" cy="35" rx="6" ry="8" fill="#493831" /><ellipse cx="53" cy="46" rx="4" ry="4" fill="#d8b098" /><rect x="49" y="86" width="19" height="46" fill="#485069" /><ellipse cx="38" cy="72" rx="8" ry="13" fill="#e6c6ce" /><ellipse cx="40" cy="134" rx="5" ry="3" fill="#d0c8c0" /><ellipse cx="72" cy="138" rx="6" ry="3" fill="#d0c8c0" /></g></svg></div>
<div class="th" style="left:749.6px;top:447.6px;width:147.8px;height:96.8px;"><svg class="ph" viewBox="0 0 150 100" preserveAspectRatio="none"><g filter="url(#b2)"><rect x="-10" y="-10" width="170" height="120" fill="#9b9389" /><rect x="-10" y="-10" width="68" height="92" fill="#8c8377" /><rect x="74" y="-10" width="90" height="42" fill="#e0e7ef" /><rect x="58" y="-10" width="16" height="50" fill="#6a6662" /><rect x="60" y="32" width="100" height="10" fill="#6b6561" /><rect x="118" y="0" width="4" height="32" fill="#b8c0c8" /><rect x="104" y="42" width="60" height="42" fill="#a9a5a1" /><ellipse cx="84" cy="28" rx="16" ry="20" fill="#dcc8c0" /><ellipse cx="84" cy="10" rx="16" ry="8" fill="#b4aca6" /><ellipse cx="77" cy="26" rx="2.5" ry="2" fill="#5a4640" /><ellipse cx="91" cy="26" rx="2.5" ry="2" fill="#5a4640" /><ellipse cx="92" cy="62" rx="24" ry="15" fill="#c91921" /><rect x="72" y="46" width="34" height="5" fill="#ecd8d8" /><ellipse cx="50" cy="64" rx="20" ry="11" fill="#ece4e4" /><ellipse cx="106" cy="72" rx="10" ry="18" fill="#ece0e0" /><ellipse cx="28" cy="46" rx="8" ry="8" fill="#c92929" /><ellipse cx="24" cy="40" rx="6" ry="4" fill="#f0d0c8" /><ellipse cx="90" cy="88" rx="24" ry="10" fill="#ecdede" /><rect x="-10" y="84" width="70" height="26" fill="#9b2979" /><ellipse cx="32" cy="98" rx="8" ry="4" fill="#e8c0e0" /><ellipse cx="138" cy="86" rx="18" ry="16" fill="#c11931" /><rect x="62" y="96" width="60" height="10" fill="#b11929" /><ellipse cx="115" cy="95" rx="6" ry="6" fill="#f0c8c8" /></g></svg></div>
<div class="t in" style="left:254.8px;top:447.4px;">18 obrázků, poslední přidán<br>Říjen 03, 2013</div>
<div class="t in" style="left:582.6px;top:447.4px;">22 obrázků, poslední přidán<br>Listopad 30, 2013</div>
<div class="t in" style="left:912px;top:447.4px;">54 obrázků, poslední<br>přidán Prosinec 30, 2013</div>
<div class="band" style="left:84px;top:604px;width:916px;height:18px;"></div>
<div class="t ti" style="left:93.4px;top:613px;">první papaní - 18.3.2014</div>
<div class="t ti" style="left:424px;top:613px;">Amy s.....</div>
<div class="t ti" style="left:751px;top:613px;">Profi focení 2014, výbra Hami</div>
<div class="th" style="left:93px;top:632px;width:147.4px;height:97px;"><svg class="ph" viewBox="0 0 150 100" preserveAspectRatio="none"><g filter="url(#b2)"><rect x="-10" y="-10" width="170" height="120" fill="#9d4b29" /><rect x="-10" y="-10" width="22" height="120" fill="#7a3a24" /><rect x="122" y="-10" width="40" height="46" fill="#c9c5c1" /><ellipse cx="140" cy="12" rx="8" ry="10" fill="#454545" /><polygon points="48,72 160,42 160,110 28,110" fill="#e5dddd"/><ellipse cx="132" cy="68" rx="10" ry="16" fill="#e2aac2" /><ellipse cx="72" cy="88" rx="5" ry="14" fill="#e2b0c8" /><ellipse cx="96" cy="42" rx="34" ry="36" fill="#e1b9a1" /><ellipse cx="106" cy="18" rx="30" ry="17" fill="#c99d79" /><ellipse cx="22" cy="76" rx="12" ry="12" fill="#e9c1a9" /><rect x="28" y="60" width="36" height="7" fill="#3f6969" transform="rotate(-8 46 63)"/><ellipse cx="60" cy="60" rx="6" ry="4" fill="#f0ece0" /><rect x="-10" y="86" width="36" height="24" fill="#6b3b29" /></g></svg></div>
<div class="th" style="left:422px;top:632px;width:147.8px;height:110px;"><svg class="ph" viewBox="0 0 150 112" preserveAspectRatio="none"><g filter="url(#b2)"><rect x="-10" y="-10" width="170" height="132" fill="#e9d0a1" /><rect x="37" y="-10" width="5" height="76" fill="#a4a49c" /><ellipse cx="102" cy="48" rx="36" ry="42" fill="#e1bdad" /><ellipse cx="106" cy="12" rx="30" ry="13" fill="#b99179" /><rect x="138" y="-10" width="22" height="70" fill="#d9b191" /><ellipse cx="142" cy="92" rx="10" ry="20" fill="#c95131" /><ellipse cx="95" cy="104" rx="42" ry="13" fill="#5961a9" /><ellipse cx="97" cy="80" rx="10" ry="12" fill="#3b9dc9" /><ellipse cx="78" cy="80" rx="15" ry="12" fill="#f1d1c9" /><ellipse cx="46" cy="94" rx="15" ry="10" fill="#c99191" /><ellipse cx="60" cy="88" rx="5" ry="12" fill="#d05080" /><ellipse cx="70" cy="46" rx="4" ry="3" fill="#40384a" /><ellipse cx="96" cy="52" rx="4" ry="3" fill="#40384a" /></g></svg></div>
<div class="th" style="left:749.6px;top:632px;width:147.8px;height:97px;"><svg class="ph" viewBox="0 0 150 100" preserveAspectRatio="none"><g filter="url(#b2)"><rect x="-10" y="-10" width="170" height="120" fill="#353535" /><ellipse cx="122" cy="22" rx="22" ry="14" fill="#5c5c5c" /><ellipse cx="30" cy="30" rx="20" ry="14" fill="#4a4a4a" /><rect x="-10" y="52" width="170" height="60" fill="#9b9b9b" /><rect x="-10" y="46" width="170" height="10" fill="#686868" /><ellipse cx="62" cy="26" rx="22" ry="12" fill="#b4b4b4" /><ellipse cx="62" cy="50" rx="23" ry="30" fill="#d2d2d2" /><ellipse cx="66" cy="100" rx="42" ry="15" fill="#f2f2f2" /><ellipse cx="52" cy="47" rx="4" ry="2.5" fill="#555" /><ellipse cx="72" cy="46" rx="4" ry="2.5" fill="#555" /><ellipse cx="62" cy="67" rx="6" ry="2.5" fill="#777" /></g></svg></div>
<div class="t in" style="left:254.8px;top:631.8px;">7 obrázků, poslední přidán<br>Březen 11, 2014</div>
<div class="t in" style="left:582.6px;top:631.8px;">19 obrázků, poslední přidán<br>Březen 20, 2014</div>
<div class="t in" style="left:912px;top:631.8px;">24 obrázků, poslední<br>přidán Červen 09, 2014</div>
<div class="band" style="left:84px;top:750.8px;width:916px;height:19.2px;"></div>
<div class="t ti" style="left:93.4px;top:760.4px;">Podzimní focení by mama 2014</div>
<div class="t ti" style="left:424px;top:760.4px;">Anetka v Rackové</div>
<div class="t ti" style="left:751px;top:760.4px;">prima víkend</div>
<div class="th" style="left:93px;top:779.4px;width:147.4px;height:96.4px;"><svg class="ph" viewBox="0 0 150 100" preserveAspectRatio="none"><g filter="url(#b2)"><rect x="-10" y="-10" width="170" height="120" fill="#15241a" /><ellipse cx="120" cy="45" rx="20" ry="46" fill="#8f8829" /><rect x="92" y="-10" width="8" height="120" fill="#23351f" /><ellipse cx="60" cy="21" rx="37" ry="18" fill="#d9d5b9" /><ellipse cx="55" cy="48" rx="26" ry="22" fill="#e9c191" /><ellipse cx="80" cy="82" rx="31" ry="27" fill="#d91515" /><ellipse cx="32" cy="76" rx="12" ry="13" fill="#c9d1b1" /><ellipse cx="115" cy="92" rx="9" ry="12" fill="#218989" /><ellipse cx="20" cy="95" rx="14" ry="6" fill="#4a6a4c" /></g></svg></div>
<div class="th" style="left:422px;top:779.4px;width:147.4px;height:97.2px;"><svg class="ph" viewBox="0 0 150 100" preserveAspectRatio="none"><g filter="url(#b2)"><rect x="-10" y="-10" width="170" height="120" fill="#0839c9" /><rect x="-10" y="-10" width="170" height="23" fill="#b16941" /><ellipse cx="127" cy="38" rx="27" ry="30" fill="#a8522a" /><ellipse cx="112" cy="54" rx="12" ry="17" fill="#e9b999" /><polygon points="84,108 104,62 160,56 160,108" fill="#29b171"/><ellipse cx="13" cy="98" rx="9" ry="4" fill="#e9d941" /><ellipse cx="38" cy="96" rx="9" ry="6" fill="#e1d131" /><rect x="103" y="70" width="5" height="15" fill="#181828" /><ellipse cx="100" cy="40" rx="4" ry="10" fill="#d89060" /></g></svg></div>
<div class="th" style="left:749.6px;top:779.4px;width:147.8px;height:87.6px;"><svg class="ph" viewBox="0 0 150 90" preserveAspectRatio="none"><g filter="url(#b2)"><rect x="-10" y="-10" width="170" height="110" fill="#c9c1b1" /><rect x="38" y="-10" width="80" height="44" fill="#d9d1c1" /><ellipse cx="70" cy="22" rx="4" ry="10" fill="#5a5a5a" /><ellipse cx="58" cy="24" rx="4" ry="9" fill="#6a6460" /><polygon points="-10,14 40,14 68,50 48,100 -10,100" fill="#1b1715"/><ellipse cx="22" cy="8" rx="24" ry="12" fill="#5b4131" /><rect x="114" y="-10" width="46" height="64" fill="#21110d" /><ellipse cx="108" cy="72" rx="36" ry="24" fill="#e1e121" /><ellipse cx="78" cy="40" rx="10" ry="12" fill="#e95191" /><ellipse cx="86" cy="60" rx="9" ry="8" fill="#e96921" /><ellipse cx="112" cy="56" rx="12" ry="9" fill="#e0a040" /><ellipse cx="98" cy="32" rx="8" ry="7" fill="#b07858" /><ellipse cx="110" cy="76" rx="9" ry="8" fill="#3939a1" /><ellipse cx="126" cy="88" rx="15" ry="7" fill="#d9d9d9" /><rect x="0" y="84" width="10" height="16" fill="#e8e8e8" /><ellipse cx="72" cy="78" rx="8" ry="12" fill="#5a2840" /></g></svg></div>
<div class="t in" style="left:254.8px;top:779.2px;">40 obrázků, poslední přidán<br>Leden 09, 2015</div>
<div class="t in" style="left:582.6px;top:779.2px;">78 obrázků, poslední přidán<br>Únor 25, 2015</div>
<div class="t in" style="left:912px;top:779.2px;">5 obrázků, poslední přidán<br>Duben 13, 2015</div>
<div class="band2" style="left:84px;top:885.6px;width:916px;height:17.4px;"></div>
<div class="t ca" style="left:90px;top:894.4px;">12 album na 1 stránce(kách)</div>
<div style="left:76px;top:904px;width:924px;height:44px;background:#57626f;border-top:2px solid #444d57;border-bottom:2px solid #444d57"></div>
<div class="t ca" style="left:90px;top:927.6px;letter-spacing:.5px">AKCE</div>
<div class="t in" style="left:908px;top:924.6px;">33</div>
<div class="band" style="left:84px;top:948.8px;width:916px;height:17.2px;"></div>
<div class="t ti" style="left:93.4px;top:957.4px;">Den obce Krasov 2015</div>
<div class="t ti" style="left:424px;top:957.4px;">Požár Krasov 7.7.2015</div>
<div class="t ti" style="left:751px;top:957.4px;">Svatba Nikol a Libor 2015</div>
<div class="th" style="left:93px;top:976px;width:147.4px;height:96.4px;"><svg class="ph" viewBox="0 0 150 100" preserveAspectRatio="none"><g filter="url(#b2)"><rect x="-10" y="-10" width="170" height="120" fill="#7f8f4f" /><rect x="-10" y="-10" width="170" height="56" fill="#e7e9ed" /><ellipse cx="88" cy="20" rx="44" ry="30" fill="#2b3929" /><ellipse cx="70" cy="38" rx="20" ry="12" fill="#34442f" /><ellipse cx="134" cy="32" rx="26" ry="22" fill="#2d3b2b" /><rect x="52" y="26" width="108" height="22" fill="#2c3a2a" /><ellipse cx="115" cy="12" rx="14" ry="8" fill="#56644f" /><polygon points="-10,22 20,24 48,38 48,50 -10,50" fill="#3b4b39"/><rect x="92" y="44" width="62" height="8" fill="#e1e1e5" /><rect x="100" y="50" width="50" height="4" fill="#5a5a58" /><rect x="33" y="46" width="25" height="8" fill="#e17949" /><rect x="-10" y="44" width="44" height="11" fill="#9c5860" /><rect x="4" y="36" width="6" height="10" fill="#e8e8f0" /><rect x="60" y="47" width="34" height="6" fill="#c8c4c8" /><rect x="-10" y="56" width="170" height="50" fill="#7f9050" /><rect x="-10" y="55" width="170" height="4" fill="#6f7f50" /><ellipse cx="60" cy="92" rx="70" ry="8" fill="#8d9a5c" /><ellipse cx="110" cy="74" rx="50" ry="5" fill="#76864e" /></g></svg></div>
<div class="th" style="left:422px;top:976px;width:147.4px;height:96.4px;"><svg class="ph" viewBox="0 0 150 100" preserveAspectRatio="none"><g filter="url(#b2)"><rect x="-10" y="-10" width="170" height="120" fill="#4c4c52" /><rect x="-10" y="-10" width="150" height="52" fill="#dde1e9" /><rect x="-10" y="-10" width="52" height="72" fill="#6f9058" /><ellipse cx="20" cy="20" rx="12" ry="14" fill="#a8c4b0" /><ellipse cx="118" cy="25" rx="14" ry="10" fill="#8a8ca0" /><ellipse cx="88" cy="8" rx="14" ry="6" fill="#6a6c7a" /><ellipse cx="70" cy="30" rx="8" ry="14" fill="#c8ccb8" /><polygon points="-10,62 138,40 160,110 -10,110" fill="#3f3f45"/><ellipse cx="112" cy="76" rx="30" ry="11" fill="#9a8a7c" /><ellipse cx="60" cy="84" rx="24" ry="6" fill="#6e6864" /><ellipse cx="40" cy="96" rx="26" ry="6" fill="#9a8e84" /><ellipse cx="20" cy="70" rx="14" ry="6" fill="#7a8a50" /><rect x="3" y="-10" width="5" height="80" fill="#1c1c18" /><rect x="29" y="-10" width="5" height="75" fill="#1c1c18" /><rect x="61" y="-10" width="6" height="72" fill="#1c1c18" transform="rotate(3 64 30)"/><rect x="88" y="-10" width="5" height="56" fill="#1c1c18" transform="rotate(5 90 20)"/><rect x="128" y="-10" width="24" height="120" fill="#1c1c18" /><rect x="52" y="5" width="3" height="45" fill="#3c3c30" /><rect x="16" y="0" width="3" height="55" fill="#2c3424" /></g></svg></div>
<div class="th" style="left:749.6px;top:976px;width:148.4px;height:82.4px;"><div class="inv"><div class="invb"><p class="a">Svatební noviny</p><p class="b">Libor a Nikol Přikrylovi</p><p class="b">4. července 2015</p></div></div></div>
<div class="t in" style="left:254.8px;top:975.8px;">86 obrázků, poslední přidán<br>Červenec 12, 2015</div>
<div class="t in" style="left:582.6px;top:975.8px;">20 obrázků, poslední přidán<br>Červenec 11, 2015</div>
<div class="t in" style="left:912px;top:975.8px;">55 obrázků, poslední<br>přidán Červenec 19, 2015</div>
<div class="band" style="left:84px;top:1082px;width:916px;height:18.8px;"></div>
<div class="t ti" style="left:93.4px;top:1091.6px;">Krnovská výstava fenomén Igeráček</div>
<div class="t ti" style="left:424px;top:1091.6px;">Svatba Venda 2015</div>
<div class="t ti" style="left:751px;top:1091.6px;">Flora Olomouc jaro 2015</div>
</div></div>
  <div class="sb"><div class="thumb" style="top:17px;height:33px"></div><svg class="ar" viewBox="0 0 17 375" width="17" height="375"><path d="M5.4 10.8 L8.6 7.2 L11.8 10.8 M5.4 364.9 L8.6 368.5 L11.8 364.9" fill="none" stroke="#4f4f4f" stroke-width="2.1"/></svg></div>
</div>

<div id="res">
  <div class="intro">Googlebot pro tuto stránku nemohl získat všechny zdroje. Zde je seznam:<svg class="hp" viewBox="0 0 16 16"><circle cx="8" cy="8" r="6.6" fill="none" stroke="#6a6a6a" stroke-width="1.2"/><text x="8" y="11.6" text-anchor="middle" font-family="Liberation Sans, sans-serif" font-weight="bold" font-size="10.5" fill="#6a6a6a">?</text></svg></div>
  <div class="row hd" style="top:48px"><span class="u" style="color:#222">URL</span><span class="t">Typ</span><span class="d">Důvod</span></div>
  <div class="row" style="top:83px"><span class="u">http://pagead2.googlesyndication.com/pagead/js/adsbygoogle.js<svg class="ext" viewBox="0 0 11 11"><path d="M5 2.5H1.5V9.5H8.5V6.5M4.8 6.3L10 1.1M6.2 1H10V4.8" fill="none" stroke="#6a6a6a" stroke-width="1.1"/></svg></span><span class="t">Skript</span><span class="d">Blokováno</span></div>
  <div class="row" style="top:110px"><span class="u">http://foto.ijacek007.cz/themes/hardwired/images/far-left.gif<svg class="ext" viewBox="0 0 11 11"><path d="M5 2.5H1.5V9.5H8.5V6.5M4.8 6.3L10 1.1M6.2 1H10V4.8" fill="none" stroke="#6a6a6a" stroke-width="1.1"/></svg></span><span class="t">Obrázek</span><span class="d">Dočasně nedostupné</span></div>
  <div class="row" style="top:137px"><span class="u">http://foto.ijacek007.cz/themes/hardwired/images/right-banner.gif<svg class="ext" viewBox="0 0 11 11"><path d="M5 2.5H1.5V9.5H8.5V6.5M4.8 6.3L10 1.1M6.2 1H10V4.8" fill="none" stroke="#6a6a6a" stroke-width="1.1"/></svg></span><span class="t">Obrázek</span><span class="d">Dočasně nedostupné</span></div>
  <div class="row" style="top:164px"><span class="u">http://foto.ijacek007.cz/themes/hardwired/images/buttonleft.gif<svg class="ext" viewBox="0 0 11 11"><path d="M5 2.5H1.5V9.5H8.5V6.5M4.8 6.3L10 1.1M6.2 1H10V4.8" fill="none" stroke="#6a6a6a" stroke-width="1.1"/></svg></span><span class="t">Obrázek</span><span class="d">Dočasně nedostupné</span></div>
  <div class="row" style="top:191px"><span class="u">http://foto.ijacek007.cz/themes/hardwired/images/buttonleft1.gif<svg class="ext" viewBox="0 0 11 11"><path d="M5 2.5H1.5V9.5H8.5V6.5M4.8 6.3L10 1.1M6.2 1H10V4.8" fill="none" stroke="#6a6a6a" stroke-width="1.1"/></svg></span><span class="t">Obrázek</span><span class="d">Dočasně nedostupné</span></div>
  <div class="row" style="top:218px"><span class="u">http://foto.ijacek007.cz/albums/userpics/thumb_garmin_zoo.jpg<svg class="ext" viewBox="0 0 11 11"><path d="M5 2.5H1.5V9.5H8.5V6.5M4.8 6.3L10 1.1M6.2 1H10V4.8" fill="none" stroke="#6a6a6a" stroke-width="1.1"/></svg></span><span class="t">Obrázek</span><span class="d">Dočasně nedostupné</span></div>
  <div class="row" style="top:245px"><span class="u">http://foto.ijacek007.cz/albums/userpics/thumb_P1060013.JPG<svg class="ext" viewBox="0 0 11 11"><path d="M5 2.5H1.5V9.5H8.5V6.5M4.8 6.3L10 1.1M6.2 1H10V4.8" fill="none" stroke="#6a6a6a" stroke-width="1.1"/></svg></span><span class="t">Obrázek</span><span class="d">Dočasně nedostupné</span></div>
  <div class="row" style="top:272px"><span class="u">http://foto.ijacek007.cz/albums/userpics/thumb_P1040965.JPG<svg class="ext" viewBox="0 0 11 11"><path d="M5 2.5H1.5V9.5H8.5V6.5M4.8 6.3L10 1.1M6.2 1H10V4.8" fill="none" stroke="#6a6a6a" stroke-width="1.1"/></svg></span><span class="t">Obrázek</span><span class="d">Dočasně nedostupné</span></div>
  <div class="row" style="top:299px;height:1px"></div>
</div>

<div id="wm">foto.ijacek007.cz :-)</div>
<div id="outer"></div>
</body>
</html>
